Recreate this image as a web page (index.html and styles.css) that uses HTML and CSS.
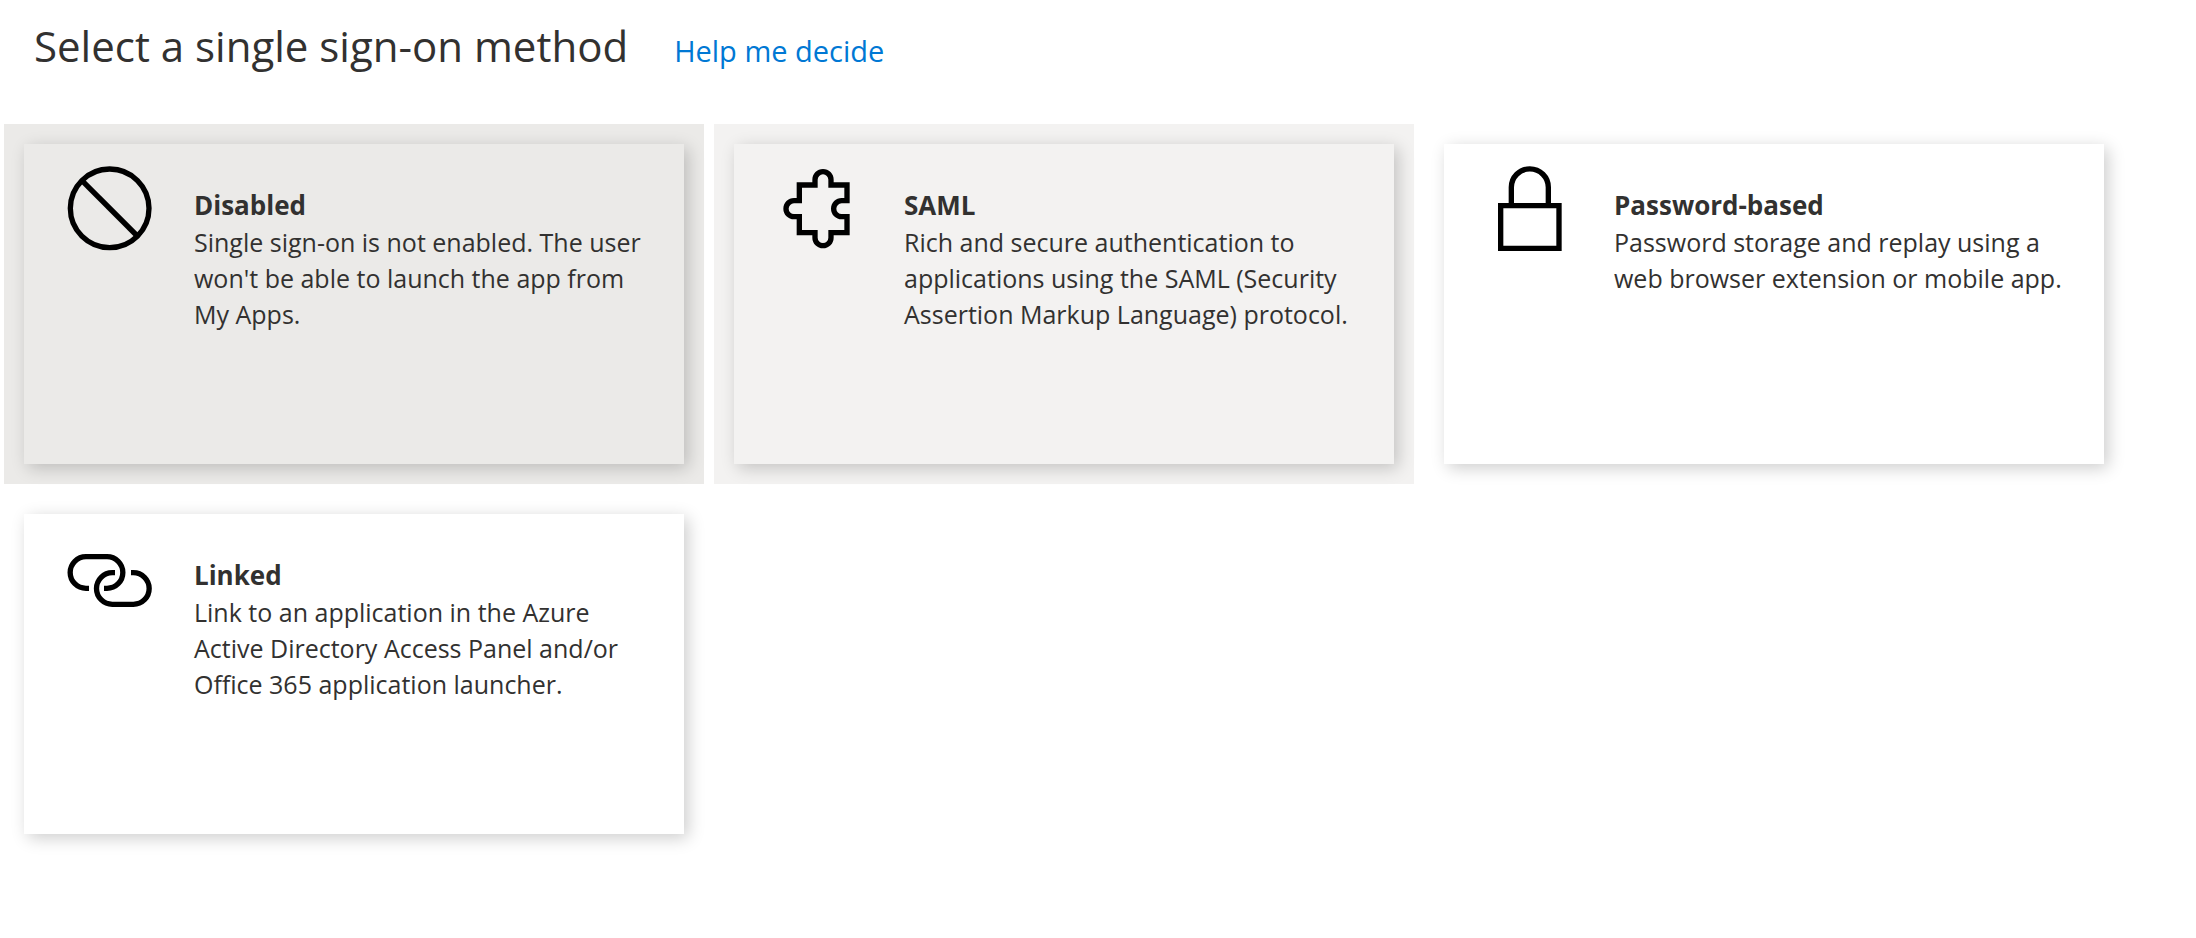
FILE: index.html
```html
<!DOCTYPE html>
<html lang="en">
<head>
<meta charset="utf-8">
<meta name="viewport" content="width=device-width, initial-scale=1">
<title>Select a single sign-on method</title>
<link rel="stylesheet" href="styles.css">
</head>
<body>
<header class="header">
  <h1 class="title">Select a single sign-on method</h1>
  <a class="help" href="#">Help me decide</a>
</header>
<main class="methods">
  <button class="method method-selected" type="button">
    <span class="card">
      <svg class="icon" viewBox="84 78 252 252" aria-hidden="true"><circle cx="209" cy="205" r="118"/><path d="M126 122 292 288"/></svg>
      <span class="text"><strong class="name">Disabled</strong><span class="description">Single sign-on is not enabled. The user won't be able to launch the app from My Apps.</span></span>
    </span>
  </button>
  <button class="method method-active" type="button">
    <span class="card">
      <svg class="icon" viewBox="54 78 252 252" aria-hidden="true"><path d="M118 135H165V119A24 24 0 0 1 213 119V135H261V182H245A24 24 0 0 0 245 230H261V278H213V293A24 24 0 0 1 165 293V278H118V230H102A24 24 0 0 1 102 182H118Z"/></svg>
      <span class="text"><strong class="name">SAML</strong><span class="description">Rich and secure authentication to applications using the SAML (Security Assertion Markup Language) protocol.</span></span>
    </span>
  </button>
  <button class="method" type="button">
    <span class="card">
      <svg class="icon" viewBox="54 78 252 252" aria-hidden="true"><path d="M92 197H267V325H92ZM124 197V142A55.5 55.5 0 0 1 235 142V197"/></svg>
      <span class="text"><strong class="name">Password-based</strong><span class="description">Password storage and replay using a web browser extension or mobile app.</span></span>
    </span>
  </button>
  <button class="method" type="button">
    <span class="card">
      <svg class="icon" viewBox="84 48 252 252" aria-hidden="true"><path d="M147 205H138A47.5 47.5 0 0 1 138 110H201A47.5 47.5 0 0 1 201 205H192M225 158H217A47.5 47.5 0 0 0 217 253H280A47.5 47.5 0 0 0 280 158H273"/></svg>
      <span class="text"><strong class="name">Linked</strong><span class="description">Link to an application in the Azure Active Directory Access Panel and/or Office 365 application launcher.</span></span>
    </span>
  </button>
</main>
</body>
</html>
```
FILE: styles.css
```css
* {
  box-sizing: border-box;
}

body {
  margin: 0;
  background: #fff;
  color: #323130;
  font-family: "Segoe UI", "Open Sans", "Noto Sans", sans-serif;
}

.header {
  display: flex;
  align-items: baseline;
  gap: 46px;
  padding: 16px 34px 48px;
}

.title {
  margin: 0;
  font-size: 42px;
  font-weight: 400;
  line-height: 60px;
}

.help {
  color: #0078d4;
  font-size: 29px;
  text-decoration: none;
}

.methods {
  display: grid;
  grid-template-columns: repeat(auto-fill, minmax(640px, 1fr));
  gap: 10px;
  padding: 0 72px 10px 4px;
}

.method {
  display: flex;
  margin: 0;
  padding: 20px;
  border: 0;
  background: #fff;
  color: inherit;
  font: inherit;
  text-align: left;
  cursor: pointer;
}

.method-selected {
  background: #ebeae8;
}

.method-active {
  background: #f3f2f1;
}

.card {
  display: flex;
  flex: 1;
  align-items: flex-start;
  gap: 42px;
  min-height: 320px;
  padding: 22px 34px 22px 44px;
  background: inherit;
  box-shadow: 4px 4px 16px rgba(0, 0, 0, 0.2);
}

.icon {
  flex: none;
  width: 84px;
  height: 84px;
  overflow: visible;
  fill: none;
  stroke: #000;
  stroke-width: 16;
}

.text {
  flex: 1;
  padding-top: 20px;
}

.name,
.description {
  display: block;
}

.name {
  font-size: 26px;
  font-weight: 700;
  line-height: 38px;
}

.description {
  font-size: 25px;
  line-height: 36px;
}
```
